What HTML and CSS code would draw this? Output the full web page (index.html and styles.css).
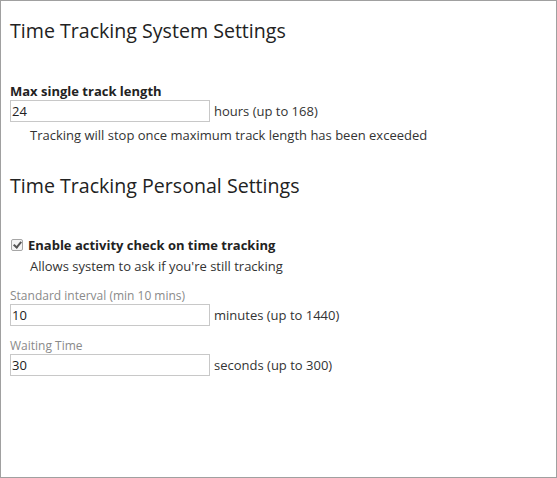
FILE: index.html
```html
<!DOCTYPE html>
<html>
<head>
<meta charset="utf-8">
<link rel="stylesheet" href="styles.css">
</head>
<body>
<div class="page">
  <h2 class="title">Time Tracking System Settings</h2>
  <div class="field first">
    <div class="label-bold">Max single track length</div>
    <div class="row"><input class="text" type="text" value="24"> <span class="unit">hours (up to 168)</span></div>
    <div class="help help-first">Tracking will stop once maximum track length has been exceeded</div>
  </div>
  <h2 class="title second">Time Tracking Personal Settings</h2>
  <div class="check-row">
    <input class="check" type="checkbox" checked>
    <span class="label-bold">Enable activity check on time tracking</span>
  </div>
  <div class="help">Allows system to ask if you're still tracking</div>
  <div class="field sub">
    <div class="label-light">Standard interval (min 10 mins)</div>
    <div class="row"><input class="text" type="text" value="10"> <span class="unit">minutes (up to 1440)</span></div>
  </div>
  <div class="field sub2">
    <div class="label-light">Waiting Time</div>
    <div class="row"><input class="text" type="text" value="30"> <span class="unit">seconds (up to 300)</span></div>
  </div>
</div>
</body>
</html>
```

FILE: styles.css
```css
html, body {
  margin: 0;
  padding: 0;
  background: #fff;
}
.page {
  box-sizing: border-box;
  width: 557px;
  height: 478px;
  border: 1px solid #a0a0a0;
  padding: 0 9px;
  font-family: "Open Sans", "Noto Sans", sans-serif;
  font-size: 13px;
  color: #222;
}
.title {
  margin: 0;
  padding-top: 16px;
  font-size: 19.6px;
  font-weight: 400;
  line-height: 28px;
  color: #222;
}
.title.second {
  padding-top: 26px;
}
.field.first {
  margin-top: 37px;
}
.label-bold {
  font-weight: 700;
  line-height: 18px;
  color: #222;
}
.row {
  display: flex;
  align-items: center;
  gap: 4px;
  height: 22px;
}
.text {
  box-sizing: border-box;
  width: 200px;
  height: 22px;
  margin: 0;
  border: 1px solid #c8c8c8;
  padding: 0 1px;
  font-family: inherit;
  font-size: 13px;
  color: #222;
  outline: none;
}
.unit {
  color: #333;
}
.help {
  padding-left: 20px;
  line-height: 22px;
  color: #333;
}
.help-first {
  padding-top: 2px;
}
.check-row {
  display: flex;
  align-items: center;
  gap: 5px;
  margin-top: 35px;
  height: 20px;
}
.check {
  appearance: none;
  -webkit-appearance: none;
  position: relative;
  box-sizing: border-box;
  margin: 0 0 0 1px;
  width: 12px;
  height: 12px;
  border: 1px solid #a6a6a6;
  border-radius: 2px;
  background: #f4f4f4;
}
.check:checked::after {
  content: "";
  position: absolute;
  left: 3px;
  top: 0px;
  width: 3px;
  height: 6px;
  border: solid #555;
  border-width: 0 2px 2px 0;
  transform: rotate(40deg);
}
.label-light {
  color: #8a8a8a;
  font-size: 12px;
  line-height: 16px;
}
.field.sub {
  margin-top: 11px;
}
.field.sub2 {
  margin-top: 12px;
}
```
